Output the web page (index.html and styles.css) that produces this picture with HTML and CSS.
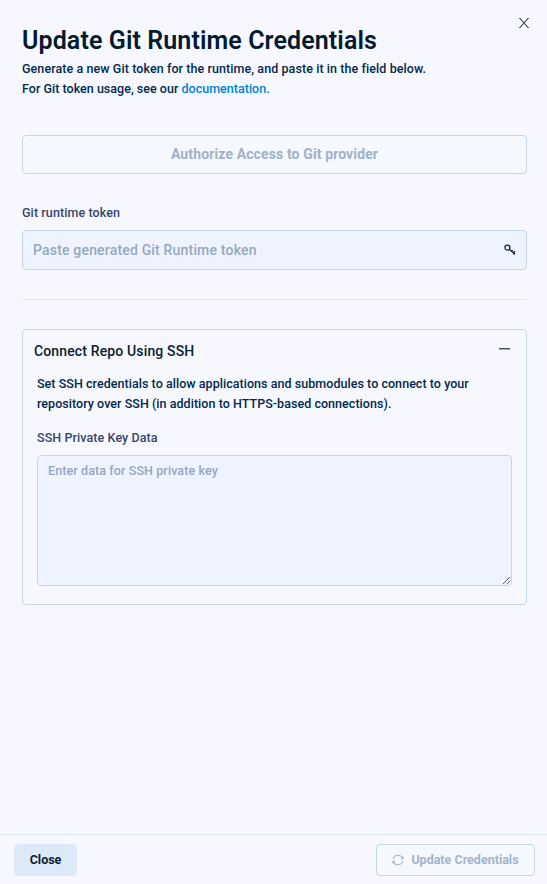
FILE: index.html
```html
<!DOCTYPE html>
<html lang="en">
<head>
<meta charset="utf-8">
<title>Update Git Runtime Credentials</title>
<link rel="stylesheet" href="styles.css">
</head>
<body>
<div class="panel">
  <main class="content">
    <header class="header">
      <h1 class="title">Update Git Runtime Credentials</h1>
      <button class="dismiss" aria-label="Close panel">
        <svg width="10" height="12" viewBox="0 0 10 12" fill="none" stroke="#2c3e4e" stroke-width="1.100"><path d="M.2 1.500h.8L5 6l4-4.500h.8M.2 10.500h.8L5 6l4 4.500h.8"/></svg>
      </button>
    </header>
    <p class="intro"><span class="intro-first">Generate a new Git token for the runtime, and paste it in the field below.</span><br><span class="intro-second">For Git token usage, see our <a class="link" href="#">documentation.</a></span></p>
    <button class="authorize" disabled>Authorize Access to Git provider</button>
    <label class="label token-label" for="token">Git runtime token</label>
    <div class="token-field">
      <input class="token-input" id="token" placeholder="Paste generated Git Runtime token">
      <svg class="key" width="12" height="12" viewBox="0 0 12 12" fill="none" stroke="#10222f"><circle cx="3.400" cy="3.600" r="2.500" stroke-width="1.300"/><path d="M5.300 5.300 11 10.200M10.900 7.300 9.300 9M8.700 6.300 7.600 7.500M9.500 10.500l.6-.9" stroke-width="1.300"/></svg>
    </div>
    <hr class="divider">
    <section class="ssh">
      <div class="ssh-header">
        <h2 class="ssh-title">Connect Repo Using SSH</h2>
        <span class="collapse"></span>
      </div>
      <p class="ssh-text">Set SSH credentials to allow applications and submodules to connect to your<br>repository over SSH (in addition to HTTPS-based connections).</p>
      <label class="label key-label" for="key">SSH Private Key Data</label>
      <textarea class="key-input" id="key" placeholder="Enter data for SSH private key"></textarea>
    </section>
  </main>
  <footer class="footer">
    <button class="button close">Close</button>
    <button class="button update" disabled>
      <svg class="refresh" width="12" height="12" viewBox="0 0 12 12" fill="none" stroke="#a3b4ca" stroke-width="1.100"><path d="M1.200 5A4.900 4.900 0 0 1 10.600 4.500M10.800 7A4.900 4.900 0 0 1 1.400 7.500"/><path d="M11.200 2.600v2.200H9M.8 9.400V7.200H3"/></svg>
      <span>Update Credentials</span>
    </button>
  </footer>
</div>
</body>
</html>
```
FILE: styles.css
```css
* { box-sizing: border-box; }
body {
  margin: 0;
  background: #f7f8ff;
  color: #00294d;
  font-family: Roboto, "Liberation Sans", sans-serif;
  font-size: 12.5px;
  font-weight: 500;
}
button, input, textarea { font: inherit; margin: 0; }
.panel { display: flex; flex-direction: column; height: 884px; }
.content { flex: 1; padding: 22px 20px 0 22px; }
.header { display: flex; justify-content: space-between; height: 37px; }
.title { margin: 0; color: #051a2e; font-size: 25px; font-weight: 600; line-height: 37px; letter-spacing: .1px; white-space: nowrap; }
.dismiss { display: flex; width: 10px; height: 12px; margin: -5px -2px 0 0; padding: 0; border: 0; background: none; }
.intro, .ssh-text { margin: 0; line-height: 20px; white-space: nowrap; }
.intro-first { letter-spacing: .08px; }
.intro-second { letter-spacing: .02px; }
.link { color: #0080db; text-decoration: none; }
.authorize {
  display: block; width: 100%; height: 39px; margin-top: 36px; padding: 0 0 2px;
  border: 1px solid #c5d5e8; border-radius: 4px; background: #f5f8ff;
  color: #a0b1c8; font-size: 14px; font-weight: 700; letter-spacing: .12px;
}
.label { display: block; color: #36456b; line-height: 18px; letter-spacing: .09px; }
.token-label { margin-top: 30px; }
.token-field {
  display: flex; align-items: center; height: 40px; margin-top: 8px; padding: 0 10px;
  border: 1px solid #c5d5e8; border-radius: 4px; background: #eef3ff;
}
.token-input { flex: 1; padding: 0; border: 0; outline: 0; background: none; font-size: 14px; letter-spacing: .18px; }
.token-input::placeholder, .key-input::placeholder { color: #94a8c0; opacity: 1; }
.divider { height: 1px; margin: 29px 0; border: 0; background: #dce8f5; }
.ssh { height: 276px; padding: 11px 14px; border: 1px solid #c5d5e8; border-radius: 4px; }
.ssh-header { display: flex; justify-content: space-between; height: 33px; margin: 0 2px 0 -3px; }
.ssh-title { margin: 0; color: #0b2030; font-size: 14px; font-weight: 500; line-height: 21px; letter-spacing: .14px; }
.ssh-text { letter-spacing: .045px; }
.collapse { width: 11px; height: 2px; margin-top: 7px; background: linear-gradient(#3f5560 50%, #a0acb8 50%); }
.key-label { margin-top: 15px; }
.key-input {
  display: block; width: 100%; height: 131px; margin-top: 8px; padding: 5px 10px;
  border: 1px solid #c5d5e8; border-radius: 4px; outline: 0; background: #eef3ff; line-height: 20px; letter-spacing: .1px;
}
.footer { display: flex; justify-content: space-between; height: 50px; padding: 9px 12px 0 14px; border-top: 1px solid #dce8f5; }
.button { display: flex; align-items: center; justify-content: center; height: 32px; padding: 0 0 2px; border: 0; border-radius: 4px; font-weight: 700; }
.close { width: 63px; background: #dce9f6; color: #0b2034; }
.update { width: 159px; gap: 7px; border: 1px solid #c5d5e8; background: #f5f8ff; color: #a3b4ca; }
.refresh { margin-top: 2px; }
```
